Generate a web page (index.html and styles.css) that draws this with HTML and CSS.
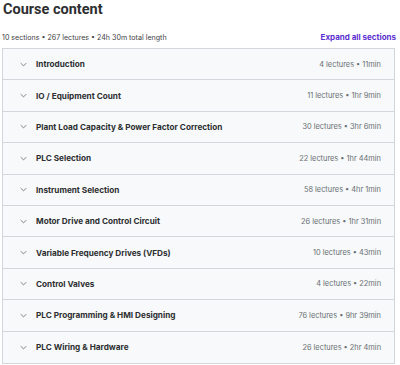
FILE: index.html
```html
<!DOCTYPE html>
<html lang="en">
<head>
  <meta charset="UTF-8">
  <title>Course content</title>
  <link rel="stylesheet" href="styles.css">
</head>
<body>
  <div class="content">
    <h2 class="titulo">Course content</h2>

    <div class="resumo">
      <span>10 sections • 267 lectures • 24h 30m total length</span>
      <button class="expandir">Expand all sections</button>
    </div>

    <div class="secoes">
      <div class="secao"><span class="seta"><svg viewBox="0 0 10 6" width="7" height="5"><path d="M1 1l4 4 4-4" fill="none" stroke="#6a6f73" stroke-width="1.2"/></svg></span><span class="nome">Introduction</span><span class="info">4 lectures • 11min</span></div>
      <div class="secao"><span class="seta"><svg viewBox="0 0 10 6" width="7" height="5"><path d="M1 1l4 4 4-4" fill="none" stroke="#6a6f73" stroke-width="1.2"/></svg></span><span class="nome">IO / Equipment Count</span><span class="info">11 lectures • 1hr 9min</span></div>
      <div class="secao"><span class="seta"><svg viewBox="0 0 10 6" width="7" height="5"><path d="M1 1l4 4 4-4" fill="none" stroke="#6a6f73" stroke-width="1.2"/></svg></span><span class="nome">Plant Load Capacity &amp; Power Factor Correction</span><span class="info">30 lectures • 3hr 6min</span></div>
      <div class="secao"><span class="seta"><svg viewBox="0 0 10 6" width="7" height="5"><path d="M1 1l4 4 4-4" fill="none" stroke="#6a6f73" stroke-width="1.2"/></svg></span><span class="nome">PLC Selection</span><span class="info">22 lectures • 1hr 44min</span></div>
      <div class="secao"><span class="seta"><svg viewBox="0 0 10 6" width="7" height="5"><path d="M1 1l4 4 4-4" fill="none" stroke="#6a6f73" stroke-width="1.2"/></svg></span><span class="nome">Instrument Selection</span><span class="info">58 lectures • 4hr 1min</span></div>
      <div class="secao"><span class="seta"><svg viewBox="0 0 10 6" width="7" height="5"><path d="M1 1l4 4 4-4" fill="none" stroke="#6a6f73" stroke-width="1.2"/></svg></span><span class="nome">Motor Drive and Control Circuit</span><span class="info">26 lectures • 1hr 31min</span></div>
      <div class="secao"><span class="seta"><svg viewBox="0 0 10 6" width="7" height="5"><path d="M1 1l4 4 4-4" fill="none" stroke="#6a6f73" stroke-width="1.2"/></svg></span><span class="nome">Variable Frequency Drives (VFDs)</span><span class="info">10 lectures • 43min</span></div>
      <div class="secao"><span class="seta"><svg viewBox="0 0 10 6" width="7" height="5"><path d="M1 1l4 4 4-4" fill="none" stroke="#6a6f73" stroke-width="1.2"/></svg></span><span class="nome">Control Valves</span><span class="info">4 lectures • 22min</span></div>
      <div class="secao"><span class="seta"><svg viewBox="0 0 10 6" width="7" height="5"><path d="M1 1l4 4 4-4" fill="none" stroke="#6a6f73" stroke-width="1.2"/></svg></span><span class="nome">PLC Programming &amp; HMI Designing</span><span class="info">76 lectures • 9hr 39min</span></div>
      <div class="secao"><span class="seta"><svg viewBox="0 0 10 6" width="7" height="5"><path d="M1 1l4 4 4-4" fill="none" stroke="#6a6f73" stroke-width="1.2"/></svg></span><span class="nome">PLC Wiring &amp; Hardware</span><span class="info">26 lectures • 2hr 4min</span></div>
    </div>
  </div>
</body>
</html>
```

FILE: styles.css
```css
body {
  margin: 0;
  background: #fff;
  font-family: Inter, "Noto Sans", sans-serif;
  color: #2d2f31;
}

.content {
  padding: 0 5px 0 2px;
}

.titulo {
  margin: 0;
  padding: 0 0 0 1px;
  font-family: Roboto, Inter, sans-serif;
  font-size: 14.5px;
  font-weight: 700;
  line-height: 20px;
}

.resumo {
  display: flex;
  justify-content: space-between;
  align-items: center;
  margin-top: 11px;
  height: 12px;
  font-size: 7.1px;
  color: #3e4143;
}

.expandir {
  border: none;
  background: none;
  padding: 0;
  font-family: inherit;
  font-size: 8px;
  font-weight: 700;
  color: #5c2fd0;
  cursor: pointer;
  margin-right: -1px;
}

.secoes {
  margin-top: 5px;
  border: 1px solid #d1d7dc;
}

.secao {
  display: flex;
  align-items: center;
  height: 31.4px;
  padding: 0 13px 0 17px;
  background: #f7f9fa;
  border-bottom: 1px solid #d1d7dc;
  box-sizing: border-box;
}

.secao:last-child {
  border-bottom: none;
}

.seta {
  display: flex;
  width: 16px;
}

.nome {
  flex: 1;
  font-size: 8.2px;
  font-weight: 700;
}

.info {
  font-size: 7.4px;
  color: #6a6f73;
}
```
